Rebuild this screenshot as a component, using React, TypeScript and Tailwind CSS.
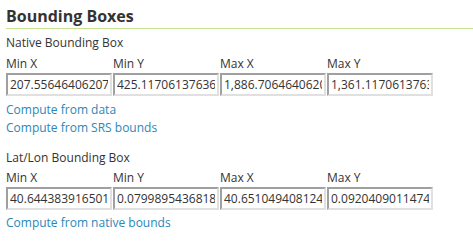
const boxes = [
  {
    title: 'Native Bounding Box',
    values: ['207.55646406207', '425.11706137636', '1,886.706464062069', '1,361.117061376399'],
    links: ['Compute from data', 'Compute from SRS bounds'],
  },
  {
    title: 'Lat/Lon Bounding Box',
    values: ['40.644383916501', '0.0799895436818', '40.651049408124', '0.0920409011474'],
    links: ['Compute from native bounds'],
  },
];

const labels = ['Min X', 'Min Y', 'Max X', 'Max Y'];

export default function App() {
  return (
    <div className="w-[473px] h-[248px] bg-white pl-[6px] text-[#333] font-['Open_Sans',sans-serif] text-[12px]">
      <h3 className="pt-[6px] pb-[1px] text-[16px] font-bold leading-[21px] text-[#333] border-b border-[#c4e28f]">
        Bounding Boxes
      </h3>
      {boxes.map((box, i) => (
        <div key={box.title} className={i === 0 ? 'pt-[5px]' : 'pt-[12px]'}>
          <div className="leading-[17px]">{box.title}</div>
          <div className={`grid grid-cols-[107px_107px_107px_107px] ${i === 0 ? 'mt-[5px]' : 'mt-[4px]'}`}>
            {labels.map((l, j) => (
              <div key={l} className="flex flex-col">
                <span className="leading-[16px]">{l}</span>
                <input
                  readOnly
                  value={box.values[j]}
                  className="w-[106px] h-[23px] mt-[1px] px-[2px] text-[12px] text-[#333] font-['Open_Sans',sans-serif] border-2 border-t-[#a0a0a0] border-l-[#a0a0a0] border-r-[#e0e0e0] border-b-[#e0e0e0] outline-none"
                />
              </div>
            ))}
          </div>
          <div className={i === 0 ? 'mt-[5px]' : 'mt-[4px]'}>
            {box.links.map((link) => (
              <a key={link} href="#" className="block leading-[18px] text-[#2a87b8]">
                {link}
              </a>
            ))}
          </div>
        </div>
      ))}
    </div>
  );
}
